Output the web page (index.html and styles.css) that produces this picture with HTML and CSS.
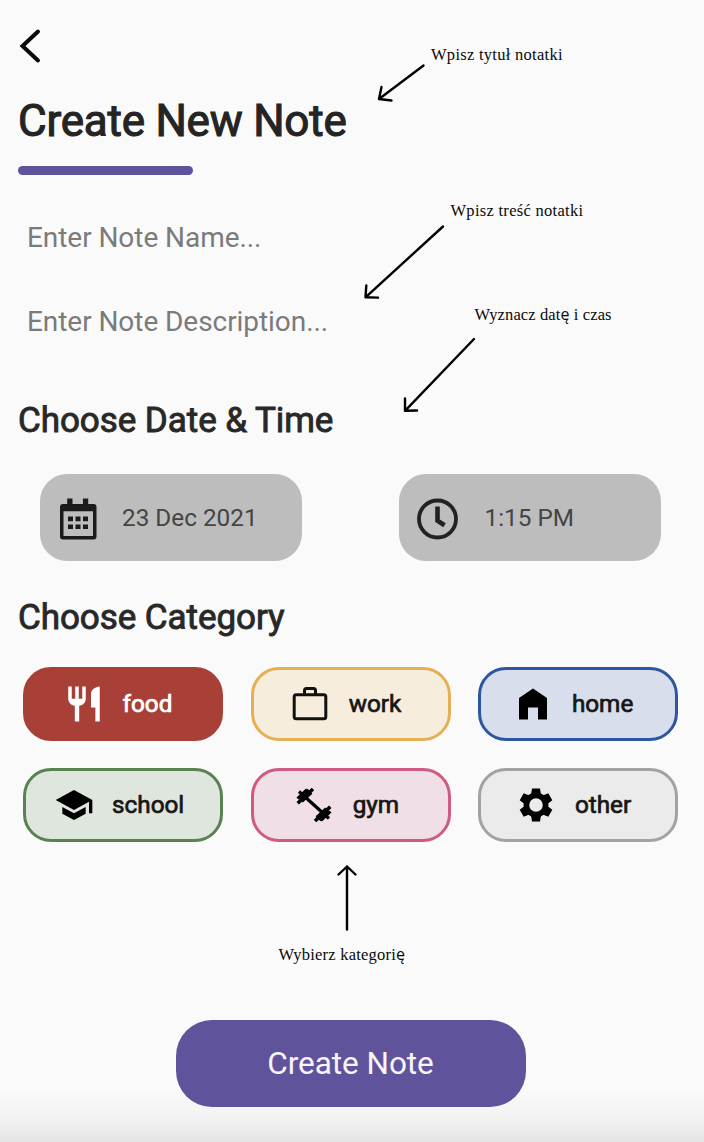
FILE: index.html
```html
<!DOCTYPE html>
<html lang="pl">
<head>
<meta charset="utf-8">
<title>Create New Note</title>
<link rel="stylesheet" href="styles.css">
</head>
<body>
<main class="screen">
  <header class="top">
    <svg class="back" viewBox="0 0 24 36"><path d="M20 3.500 4.500 18 20 32.500"/></svg>
    <h1 class="title">Create New Note</h1>
    <div class="underline"></div>
  </header>

  <div class="field">Enter Note Name...</div>
  <div class="field field-last">Enter Note Description...</div>

  <h2 class="heading">Choose Date &amp; Time</h2>
  <div class="pickers">
    <div class="picker">
      <svg class="picker-icon" viewBox="0 0 42 42">
        <path d="M9.200 .5h5.300v5.500h10.400V.5h5.300v5.500H35.500q3 0 3 3v29.500q0 3-3 3H5q-3 0-3-3V9q0-3 3-3h4.200zM5.500 13.200V38H35V13.200z" fill-rule="evenodd"/>
        <path d="M10 18.600h5v4.700h-5zm7.500 0h5v4.700h-5zm7.500 0h5v4.700h-5zm-15 7.800h5v4.700h-5zm7.500 0h5v4.700h-5zm7.500 0h5v4.700h-5z"/>
      </svg>
      <span class="date">23 Dec 2021</span>
    </div>
    <div class="picker">
      <svg class="picker-icon line" viewBox="0 0 42 42">
        <circle cx="20.500" cy="21" r="18.500" stroke-width="3.800"/>
        <path d="M20.500 8.500v14.200l7 4.500" stroke-width="4.600"/>
      </svg>
      <span class="time">1:15 PM</span>
    </div>
  </div>

  <h2 class="heading">Choose Category</h2>
  <div class="chips">
    <div class="chip food">
      <svg class="icon" viewBox="0 0 24 24"><path d="M11 9H9V2H7v7H5V2H3v7c0 2.120 1.660 3.840 3.750 3.970V22h2.500v-9.030C11.340 12.840 13 11.120 13 9V2h-2v7zm5-3v8h2.500v8H21V2c-2.760 0-5 2.240-5 4z"/></svg>
      <span>food</span>
    </div>
    <div class="chip work">
      <svg class="icon line" viewBox="0 0 42 42"><rect x="5.200" y="11.700" width="31.600" height="24" rx="2" stroke-width="3"/><path d="M15.500 11V7.500q0-2 2-2h7q2 0 2 2V11" stroke-width="3"/></svg>
      <span>work</span>
    </div>
    <div class="chip home">
      <svg class="icon" viewBox="0 0 42 42"><path d="M21 5.500 35 15v21.500h-9V24.500H16v12H7V15z"/></svg>
      <span>home</span>
    </div>
    <div class="chip school">
      <svg class="icon" viewBox="0 0 24 24"><path d="M5 13.180v4L12 21l7-3.820v-4L12 17l-7-3.820zM12 3 1 9l11 6 9-4.910V17h2V9L12 3z"/></svg>
      <span>school</span>
    </div>
    <div class="chip gym">
      <svg class="icon line dumbbell" viewBox="0 0 42 42"><path d="M6 7.500 36 34.500" stroke-width="3.200"/><path d="M4.700 19.200 20 5M37.300 22.800 22 37" stroke-width="3.600"/><path d="M7.500 16 17 7.200M34.500 26 25 34.800" stroke-width="7"/><path d="M4.500 14.500 14 5.500M37.500 27.500 28 36.500" stroke-width="3"/></svg>
      <span>gym</span>
    </div>
    <div class="chip other">
      <svg class="icon" viewBox="-21 -21 42 42">
        <circle class="ring" r="9.600"/>
        <g id="teeth"><path d="M-5-10-4-16.500H4L5-10z"/><path d="M-5-10-4-16.500H4L5-10z" transform="rotate(60)"/><path d="M-5-10-4-16.500H4L5-10z" transform="rotate(120)"/></g>
        <use href="#teeth" transform="rotate(180)"/>
      </svg>
      <span>other</span>
    </div>
  </div>

  <div class="submit">Create Note</div>

  <svg class="notes" viewBox="0 0 704 1142">
    <g class="arrows">
      <path d="M423.500 65.500 379 99M381.500 87 379 99l12.500 1.500"/>
      <path d="M443 226.500 365.500 297.300M366.300 285.500l-.8 11.800 12.500.3"/>
      <path d="M474 339 405 410.800M405 398.500v12.300l12-.3"/>
      <path d="M347 929.500v-63M338.500 874.500l8.500-8 8.500 8"/>
    </g>
    <text x="431" y="59.500" textLength="131.500">Wpisz tytuł notatki</text>
    <text x="450.500" y="216" textLength="132.500">Wpisz treść notatki</text>
    <text x="474.500" y="320.300" textLength="137">Wyznacz dat<tspan class="alt">ę</tspan> i czas</text>
    <text x="278.500" y="960.300" textLength="126.500">Wybierz kategori<tspan class="alt">ę</tspan></text>
  </svg>
</main>
</body>
</html>
```
FILE: styles.css
```css
* { box-sizing: border-box; }

body {
  margin: 0;
  background: #fafafa;
  font-family: Roboto, "Liberation Sans", sans-serif;
}

.screen {
  position: relative;
  width: 704px;
  height: 1142px;
  padding-top: 28px;
  overflow: hidden;
  background: linear-gradient(#fafafa 1088px, #f3f3f3 1118px, #e4e4e4 1142px);
}

.top { padding-left: 18px; }

.back {
  display: block;
  width: 24px;
  height: 36px;
  fill: none;
  stroke: #0a0a0a;
  stroke-width: 4;
  stroke-linecap: round;
}

.title {
  margin: 31px 0 19px;
  font-size: 44px;
  line-height: 52px;
  font-weight: 400;
  letter-spacing: -0.23px;
  color: #242424;
  -webkit-text-stroke: 1.1px #242424;
}

.underline {
  width: 174.5px;
  height: 9px;
  border-radius: 5px;
  background: #5f549c;
  margin-bottom: 46px;
}

.field {
  padding-left: 27px;
  margin-bottom: 50px;
  font-size: 28px;
  line-height: 34px;
  letter-spacing: -0.06px;
  color: #7b7b7b;
}

.field-last { margin-bottom: 61px; }

.heading {
  margin: 0;
  padding-left: 18px;
  font-size: 35px;
  line-height: 42px;
  font-weight: 400;
  letter-spacing: -0.06px;
  color: #282828;
  -webkit-text-stroke: 0.9px #282828;
}

.pickers {
  display: flex;
  gap: 97px;
  padding: 31.5px 0 36.5px 40px;
}

.picker {
  display: flex;
  align-items: center;
  width: 262px;
  height: 87px;
  padding-left: 18px;
  border-radius: 27px;
  background: #bdbdbd;
  font-size: 24.3px;
  color: #444;
}

.picker-icon {
  width: 42px;
  height: 42px;
  margin-top: 4px;
  fill: #1b1b1b;
}

.date { margin-left: 22px; }
.time { margin-left: 25.5px; }

.line {
  fill: none;
  stroke: #111;
}

.picker-icon.line { stroke: #222; }
.dumbbell { stroke: #000; }

.chips {
  display: grid;
  grid-template-columns: repeat(3, 200px);
  column-gap: 27.7px;
  row-gap: 27px;
  padding: 27.5px 0 0 23px;
}

.chip {
  display: flex;
  align-items: center;
  gap: 17.5px;
  height: 74px;
  border: 3.5px solid;
  border-radius: 28px;
  font-size: 24.3px;
  color: #161616;
}

.chip span {
  margin-top: -1px;
  -webkit-text-stroke: 0.7px currentColor;
}

.icon {
  width: 42px;
  height: 42px;
}

.ring {
  fill: none;
  stroke: #000;
  stroke-width: 5.6;
}

.food { background: #a84037; border-color: #a84037; padding-left: 37px; color: #fff; }
.food .icon { fill: #fff; }
.work { background: #f6eddc; border-color: #e5af57; padding-left: 35.5px; }
.home { background: #d8deeb; border-color: #2d55a0; padding-left: 31px; }
.school { background: #dee6dd; border-color: #588250; padding-left: 26.5px; }
.school .icon { width: 40px; margin: 0 1px; }
.gym { background: #f0dfe7; border-color: #cf5b82; padding-left: 39.5px; }
.other { background: #ebebeb; border-color: #a2a2a2; padding-left: 34px; }

.submit {
  width: 350px;
  height: 87px;
  margin: 178px 0 0 175.5px;
  border-radius: 36px;
  background: #5f549c;
  color: #f7f5fb;
  font-size: 31.5px;
  line-height: 87px;
  text-align: center;
  letter-spacing: -0.05px;
}

/* Annotations drawn over the screen */
.notes {
  position: absolute;
  inset: 0;
  width: 704px;
  height: 1142px;
  font-family: "Liberation Serif", serif;
  font-size: 16.5px;
  fill: #0a0a0a;
}

.arrows {
  fill: none;
  stroke: #000;
  stroke-width: 2.4;
  stroke-linecap: round;
  stroke-linejoin: round;
}

.alt { font-family: "Open Sans", sans-serif; font-size: 16px; }
```
